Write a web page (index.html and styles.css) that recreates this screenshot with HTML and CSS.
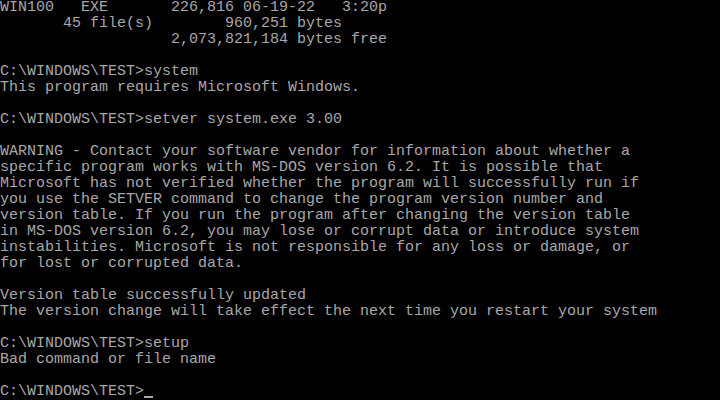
FILE: index.html
```html
<!DOCTYPE html>
<html>
<head>
<meta charset="utf-8">
<link rel="stylesheet" href="styles.css">
</head>
<body>
<pre class="screen">WIN100   EXE       226,816 06-19-22   3:20p
       45 file(s)        960,251 bytes
                   2,073,821,184 bytes free

C:\WINDOWS\TEST&gt;system
This program requires Microsoft Windows.

C:\WINDOWS\TEST&gt;setver system.exe 3.00

WARNING - Contact your software vendor for information about whether a
specific program works with MS-DOS version 6.2. It is possible that
Microsoft has not verified whether the program will successfully run if
you use the SETVER command to change the program version number and
version table. If you run the program after changing the version table
in MS-DOS version 6.2, you may lose or corrupt data or introduce system
instabilities. Microsoft is not responsible for any loss or damage, or
for lost or corrupted data.

Version table successfully updated
The version change will take effect the next time you restart your system

C:\WINDOWS\TEST&gt;setup
Bad command or file name

C:\WINDOWS\TEST&gt;<span class="cursor"></span></pre>
</body>
</html>
```
FILE: styles.css
```css
html, body {
  margin: 0;
  padding: 0;
  background: #000;
  width: 720px;
  height: 400px;
  overflow: hidden;
}
.screen {
  margin: 0;
  padding: 0;
  font-family: "Liberation Mono", monospace;
  font-size: 15px;
  line-height: 16px;
  color: #a8a8a8;
  white-space: pre;
}
.cursor {
  display: inline-block;
  width: 9px;
  height: 2px;
  background: #a8a8a8;
  vertical-align: -3px;
}
```
